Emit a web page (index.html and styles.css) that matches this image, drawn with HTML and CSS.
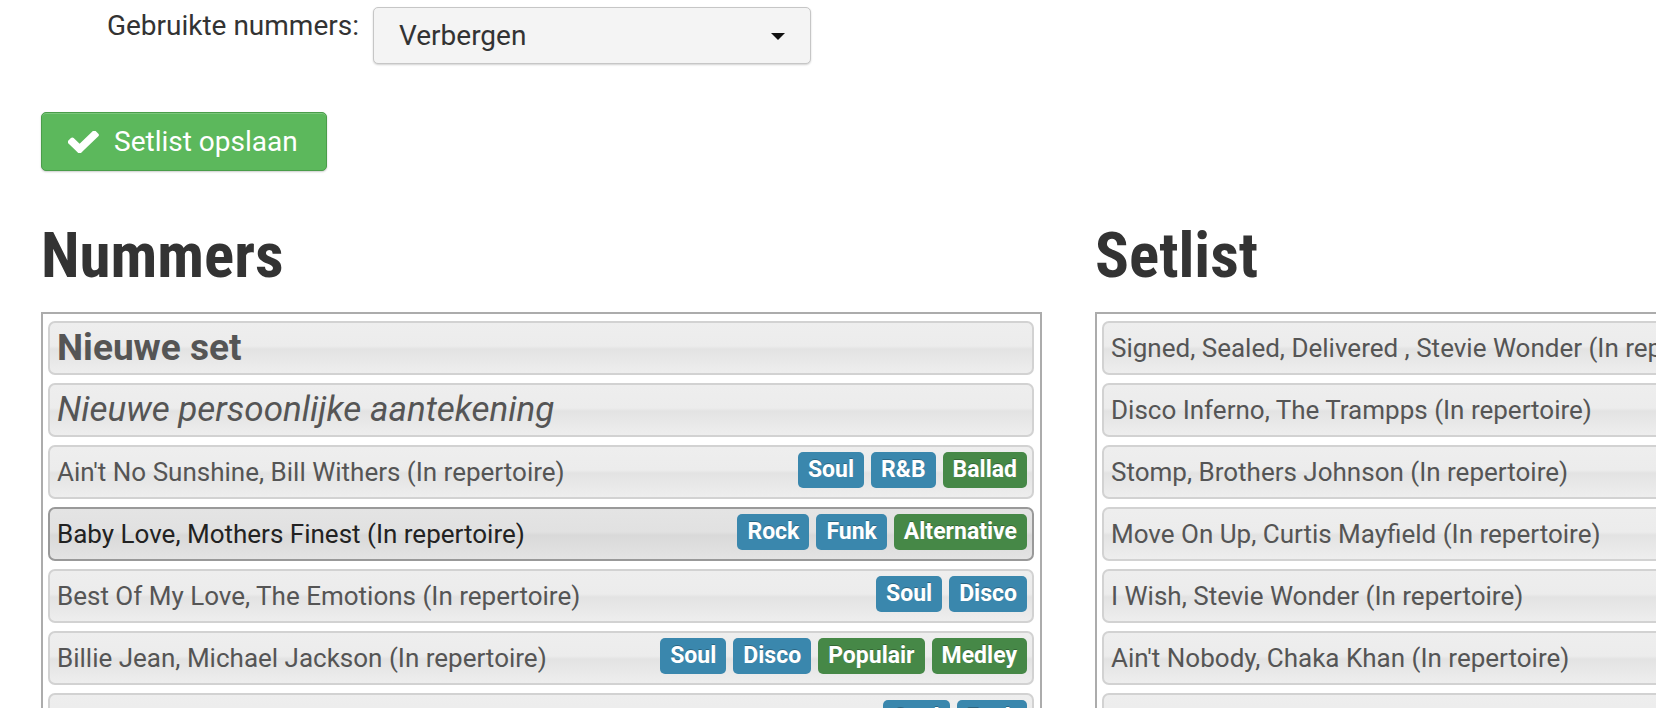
FILE: index.html
```html
<!DOCTYPE html>
<html lang="nl">
<head>
<meta charset="utf-8">
<title>Setlist</title>
<link rel="stylesheet" href="styles.css">
</head>
<body>
<div class="page">
  <div class="form-row">
    <label class="form-label">Gebruikte nummers:</label>
    <div class="select">
      <span class="select-value">Verbergen</span>
      <span class="select-arrow"></span>
    </div>
  </div>

  <button class="btn-save" type="button">
    <svg class="check" viewBox="140 360 1535 1140" preserveAspectRatio="none" aria-hidden="true"><path d="M1671 566q0 40-28 68l-724 724-136 136q-28 28-68 28t-68-28l-136-136-362-362q-28-28-28-68t28-68l136-136q28-28 68-28t68 28l294 295 656-657q28-28 68-28t68 28l136 136q28 28 28 68z" fill="#fff"/></svg>
    <span>Setlist opslaan</span>
  </button>

  <div class="columns">
    <section class="column">
      <h1 class="col-title">Nummers</h1>
      <div class="panel">
        <div class="row"><span class="title title-set">Nieuwe set</span></div>
        <div class="row"><span class="title title-note">Nieuwe persoonlijke aantekening</span></div>
        <div class="row"><span class="title">Ain't No Sunshine, Bill Withers (In repertoire)</span>
          <div class="tags"><span class="tag blue">Soul</span><span class="tag blue">R&amp;B</span><span class="tag green">Ballad</span></div></div>
        <div class="row active"><span class="title">Baby Love, Mothers Finest (In repertoire)</span>
          <div class="tags"><span class="tag blue">Rock</span><span class="tag blue">Funk</span><span class="tag green">Alternative</span></div></div>
        <div class="row"><span class="title">Best Of My Love, The Emotions (In repertoire)</span>
          <div class="tags"><span class="tag blue">Soul</span><span class="tag blue">Disco</span></div></div>
        <div class="row"><span class="title">Billie Jean, Michael Jackson (In repertoire)</span>
          <div class="tags"><span class="tag blue">Soul</span><span class="tag blue">Disco</span><span class="tag green">Populair</span><span class="tag green">Medley</span></div></div>
        <div class="row"><span class="title">Blame It On The Boogie, The Jacksons (In repertoire)</span>
          <div class="tags"><span class="tag blue">Soul</span><span class="tag blue">Funk</span></div></div>
      </div>
    </section>

    <section class="column">
      <h1 class="col-title">Setlist</h1>
      <div class="panel">
        <div class="row"><span class="title">Signed, Sealed, Delivered , Stevie Wonder (In repertoire)</span></div>
        <div class="row"><span class="title">Disco Inferno, The Trampps (In repertoire)</span></div>
        <div class="row"><span class="title">Stomp, Brothers Johnson (In repertoire)</span></div>
        <div class="row"><span class="title">Move On Up, Curtis Mayfield (In repertoire)</span></div>
        <div class="row"><span class="title">I Wish, Stevie Wonder (In repertoire)</span></div>
        <div class="row"><span class="title">Ain't Nobody, Chaka Khan (In repertoire)</span></div>
        <div class="row"><span class="title">September, Earth Wind &amp; Fire (In repertoire)</span></div>
      </div>
    </section>
  </div>
</div>
</body>
</html>
```

FILE: styles.css
```css
html, body {
  margin: 0;
  padding: 0;
  overflow: hidden;
  background: #fff;
}

body {
  font-family: Roboto, "Noto Sans", "Liberation Sans", sans-serif;
  color: #333;
}

.page {
  padding: 7px 0 0 41px;
  width: 2100px;
}

/* top form row */
.form-row {
  display: flex;
  align-items: flex-start;
}

.form-label {
  width: 318px;
  margin-right: 14px;
  margin-top: 2px;
  text-align: right;
  font-size: 28px;
  line-height: 33px;
  color: #333;
}

.select {
  box-sizing: border-box;
  width: 438px;
  height: 57px;
  display: flex;
  align-items: center;
  justify-content: space-between;
  padding: 0 25px;
  background: #f4f4f4;
  border: 1px solid #c6c6c6;
  border-radius: 5px;
  box-shadow: 0 1px 2px rgba(0, 0, 0, 0.18);
}

.select-value {
  font-size: 28px;
  line-height: 33px;
  color: #333;
}

.select-arrow {
  width: 0;
  height: 0;
  border-left: 7.5px solid transparent;
  border-right: 7.5px solid transparent;
  border-top: 7px solid #111;
  margin-top: 1px;
}

/* save button */
.btn-save {
  box-sizing: border-box;
  margin-top: 48px;
  height: 59px;
  width: 286px;
  display: flex;
  align-items: center;
  padding: 0 0 0 26px;
  background: #5cb85c;
  border: 1px solid #4a9d4a;
  border-radius: 5px;
  box-shadow: inset 0 1px 0 rgba(255, 255, 255, 0.2), 0 1px 2px rgba(0, 0, 0, 0.2);
  color: #fff;
  font-family: Roboto, "Noto Sans", sans-serif;
  font-size: 28px;
  line-height: 33px;
  cursor: pointer;
}

.check {
  width: 31px;
  height: 22px;
  margin-right: 15px;
}

/* columns */
.columns {
  display: grid;
  grid-template-columns: 1001px 1001px;
  column-gap: 53px;
  margin-top: 53px;
}

.col-title {
  margin: 0 0 25px;
  font-family: "Roboto Condensed", "Liberation Sans Narrow", Roboto, sans-serif;
  font-weight: 700;
  font-size: 63px;
  line-height: 63px;
  color: #333;
}

.panel {
  border: 2px solid #acacac;
  padding: 7px 6px 7px 5px;
  display: flex;
  flex-direction: column;
  gap: 8px;
}

.row {
  box-sizing: border-box;
  height: 54px;
  display: flex;
  align-items: center;
  padding: 0 5px 0 7px;
  border: 2px solid #d2d2d2;
  border-radius: 7px;
  background: linear-gradient(#eeeeee 0%, #ececec 46%, #e3e3e3 52%, #e8e8e8 75%, #eeeeee 100%);
  white-space: nowrap;
  overflow: hidden;
}

.row.active {
  border-color: #999;
  background: linear-gradient(#e4e4e4 0%, #e1e1e1 46%, #d9d9d9 52%, #dedede 75%, #e4e4e4 100%);
}

.title {
  font-size: 26px;
  line-height: 30px;
  color: #555;
}

.row.active .title {
  color: #222;
}

.title-set {
  font-size: 37px;
  line-height: 42px;
  font-weight: 700;
}

.title-note {
  font-size: 35px;
  line-height: 42px;
  font-style: italic;
}

.tags {
  margin-left: auto;
  display: flex;
  gap: 7px;
  margin-top: -4px;
}

.tag {
  display: inline-block;
  height: 36px;
  line-height: 36px;
  padding: 0 10px;
  border-radius: 5px;
  font-size: 23px;
  font-weight: 700;
  color: #fff;
  text-shadow: 0 -1px 0 rgba(0, 0, 0, 0.25);
}

.tag.blue {
  background: #3a87ad;
}

.tag.green {
  background: #468847;
}
```
